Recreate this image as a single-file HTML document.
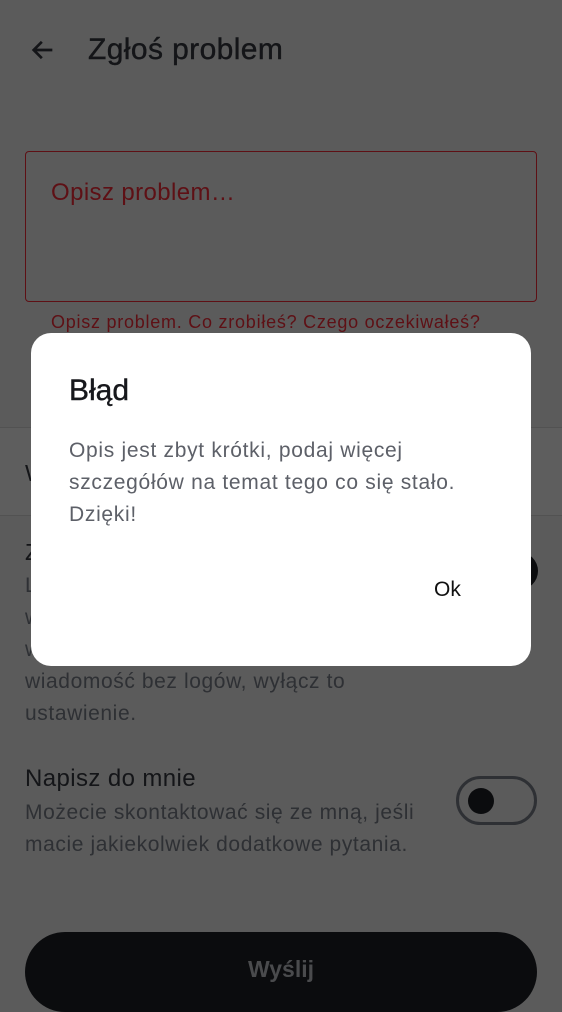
<!DOCTYPE html>
<html><head><meta charset="utf-8">
<style>
*{margin:0;padding:0;box-sizing:border-box}
html,body{width:562px;height:1000px;overflow:hidden;background:#5b5b5b;font-family:"Liberation Sans",sans-serif}
.abs{position:absolute;white-space:nowrap}
.t{color:#141518}
.g{color:#2e3034}
.red{color:#5e1015}
</style></head><body>
<div class="abs" style="left:0;top:0;width:562px;height:1000px">
<svg class="abs" style="left:29px;top:36px" width="28" height="28" viewBox="0 0 24 24"><path d="M20 12H5M11 5l-7 7 7 7" stroke="#141518" stroke-width="2.3" fill="none"/></svg>
<div class="abs t" style="left:88px;top:30px;font-size:30px;line-height:40px;letter-spacing:0.4px;-webkit-text-stroke:0.4px #141518">Zgłoś problem</div>
<div class="abs" style="left:25px;top:151px;width:512px;height:151px;border:1.5px solid #5e1015;border-radius:4px"></div>
<div class="abs red" style="left:51px;top:178px;font-size:24px;line-height:30px;letter-spacing:0.4px">Opisz problem…</div>
<div class="abs red" style="left:51px;top:310px;font-size:18px;line-height:24px;letter-spacing:0.75px">Opisz problem. Co zrobiłeś? Czego oczekiwałeś?</div>
<div class="abs" style="left:0;top:427px;width:562px;height:1px;background:#525252"></div>
<div class="abs" style="left:0;top:428px;width:562px;height:87px;background:#5e5e5e"></div>
<div class="abs" style="left:0;top:515px;width:562px;height:1px;background:#525252"></div>
<div class="abs t" style="left:25px;top:458px;font-size:23px;line-height:30px">W</div>
<div class="abs t" style="left:25px;top:537px;font-size:23px;line-height:30px">Z</div>
<div class="abs g" style="left:25px;top:570px;font-size:21px;line-height:32px;letter-spacing:0.6px">L<br>w<br>w<br>wiadomość bez logów, wyłącz to<br>ustawienie.</div>
<div class="abs" style="left:480px;top:552px;width:58px;height:38px;border-radius:19px;background:#0b0c0e"></div>
<div class="abs t" style="left:25px;top:764px;font-size:24px;line-height:30px;letter-spacing:0.4px">Napisz do mnie</div>
<div class="abs g" style="left:25px;top:797px;font-size:21px;line-height:32px;letter-spacing:0.6px">Możecie skontaktować się ze mną, jeśli<br>macie jakiekolwiek dodatkowe pytania.</div>
<div class="abs" style="left:456px;top:776px;width:81px;height:49px;border:3px solid #2e3034;border-radius:25px"></div>
<div class="abs" style="left:468px;top:788px;width:26px;height:26px;border-radius:50%;background:#0b0c0e"></div>
<div class="abs" style="left:25px;top:932px;width:512px;height:80px;border-radius:40px;background:#0b0c0e"></div>
<div class="abs" style="left:0;top:952px;width:562px;text-align:center;font-size:23px;font-weight:bold;color:#4a4b4d;line-height:34px">Wyślij</div>
</div>
<div class="abs" style="left:31px;top:333px;width:500px;height:333px;background:#fff;border-radius:20px">
<div class="abs" style="left:38px;top:40px;font-size:30px;line-height:36px;color:#17181c;-webkit-text-stroke:0.4px #17181c">Błąd</div>
<div class="abs" style="left:38px;top:102px;font-size:21px;line-height:32px;color:#5d6068;letter-spacing:0.7px">Opis jest zbyt krótki, podaj więcej<br>szczegółów na temat tego co się stało.<br>Dzięki!</div>
<div class="abs" style="left:403px;top:243px;font-size:21px;line-height:28px;color:#111">Ok</div>
</div>
</body></html>
